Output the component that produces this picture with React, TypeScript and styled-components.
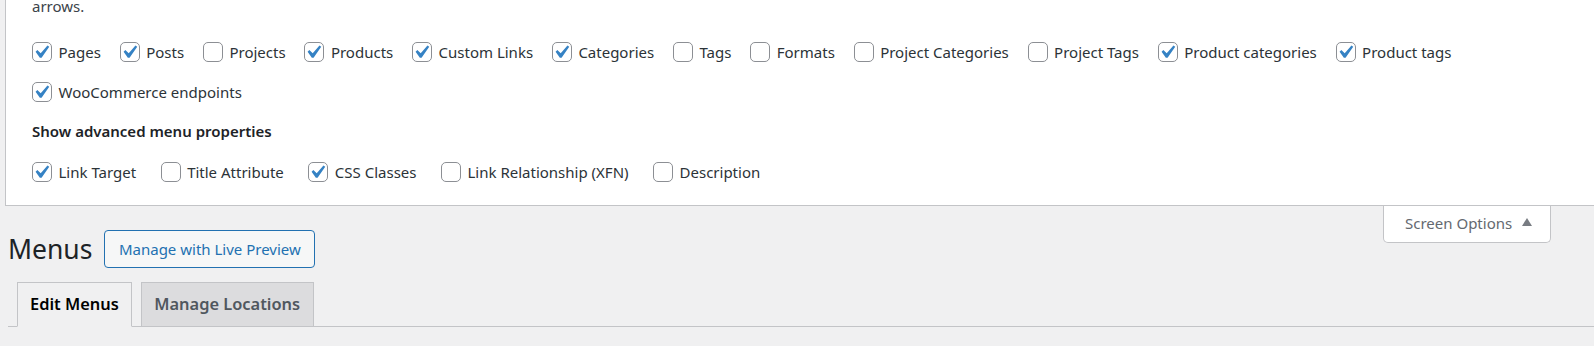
import React from 'react';
import styled, { createGlobalStyle } from 'styled-components';

const GlobalStyle = createGlobalStyle`
  html, body {
    margin: 0;
    padding: 0;
    background: #f0f0f1;
    font-family: "Noto Sans", "Open Sans", sans-serif;
    color: #3c434a;
  }
`;

const Page = styled.div`
  width: 1594px;
  height: 346px;
  overflow: hidden;
`;

const ScreenMeta = styled.div`
  margin-left: 5px;
  background: #fff;
  border-left: 1px solid #c3c4c7;
  border-bottom: 1px solid #c3c4c7;
  padding: 0 0 13px 26px;
  font-size: 15px;
`;

const Intro = styled.p`
  margin: 0 0 20px;
  line-height: 12px;
`;

const PrefsRow = styled.div`
  display: flex;
  flex-wrap: wrap;
  line-height: 40px;
`;

const Legend = styled.h5`
  margin: 7px 0 9px;
  font-size: 15px;
  line-height: 24px;
  font-weight: 600;
  color: #1d2327;
`;

const Label = styled.label<{ $gap: number }>`
  display: inline-flex;
  align-items: center;
  height: 40px;
  margin-right: ${p => p.$gap}px;
  color: #2c3338;
  white-space: nowrap;
`;

const Box = styled.span`
  position: relative;
  box-sizing: border-box;
  width: 20px;
  height: 20px;
  margin-right: 6.5px;
  border: 1px solid #8c8f94;
  border-radius: 5px;
  background: #fff;
  flex: none;

  svg {
    position: absolute;
    left: -5px;
    top: -4.5px;
  }
`;

const ScreenMetaLinks = styled.div`
  float: right;
  margin-right: 43px;
`;

const ScreenTab = styled.button`
  display: flex;
  align-items: center;
  gap: 10px;
  box-sizing: border-box;
  width: 168px;
  height: 37px;
  padding: 0 0 2px 21px;
  background: #fff;
  border: 1px solid #c3c4c7;
  border-top: none;
  border-radius: 0 0 5px 5px;
  font-family: inherit;
  font-size: 15px;
  color: #646970;
  cursor: pointer;
`;

const Arrow = styled.span`
  width: 0;
  height: 0;
  margin-top: -2px;
  border-left: 5px solid transparent;
  border-right: 5px solid transparent;
  border-bottom: 8px solid #787c82;
`;

const Wrap = styled.div`
  padding: 24px 0 0 8px;
`;

const TitleRow = styled.div`
  display: flex;
  align-items: center;
  height: 37.5px;
`;

const Title = styled.h1`
  margin: 0;
  font-size: 26.5px;
  font-weight: 400;
  line-height: 1.3;
  color: #1d2327;
`;

const OutlineButton = styled.a`
  display: inline-flex;
  align-items: center;
  box-sizing: border-box;
  height: 37.5px;
  margin-left: 12px;
  padding: 0 13.5px;
  border: 1px solid #2271b1;
  border-radius: 4px;
  background: #f6f7f7;
  color: #2271b1;
  font-size: 15px;
  text-decoration: none;
`;

const TabBar = styled.div`
  display: flex;
  margin-top: 14.5px;
  border-bottom: 1px solid #c3c4c7;
`;

const Tab = styled.a<{ $active?: boolean }>`
  box-sizing: border-box;
  height: 45px;
  margin: 0 0 -1px 8.5px;
  padding: 6.25px 12.5px;
  border: 1px solid #c3c4c7;
  border-bottom-color: ${p => (p.$active ? '#f0f0f1' : '#c3c4c7')};
  background: ${p => (p.$active ? '#f0f0f1' : '#dcdcde')};
  color: ${p => (p.$active ? '#000' : '#50575e')};
  font-size: 16.4px;
  font-weight: 600;
  line-height: 30px;
  text-decoration: none;
`;

const Check = () => (
  <svg width="26.25" height="26.25" viewBox="0 0 20 20" aria-hidden="true">
    <path fill="#3582c4" d="M14.83 4.89l1.34.94-5.81 8.38H9.02L5.78 9.67l1.34-1.25 2.57 2.4z" />
  </svg>
);

const Pref = ({ label, checked, gap }: { label: string; checked?: boolean; gap: number }) => (
  <Label $gap={gap}>
    <Box>{checked && <Check />}</Box>
    {label}
  </Label>
);

const boxes: [string, boolean][] = [
  ['Pages', true],
  ['Posts', true],
  ['Projects', false],
  ['Products', true],
  ['Custom Links', true],
  ['Categories', true],
  ['Tags', false],
  ['Formats', false],
  ['Project Categories', false],
  ['Project Tags', false],
  ['Product categories', true],
  ['Product tags', true],
  ['WooCommerce endpoints', true],
];

const advanced: [string, boolean][] = [
  ['Link Target', true],
  ['Title Attribute', false],
  ['CSS Classes', true],
  ['Link Relationship (XFN)', false],
  ['Description', false],
];

export default function App() {
  return (
    <Page>
      <GlobalStyle />
      <ScreenMeta>
        <Intro>arrows.</Intro>
        <PrefsRow>
          {boxes.map(([l, c]) => (
            <Pref key={l} label={l} checked={c} gap={18.8} />
          ))}
        </PrefsRow>
        <Legend>Show advanced menu properties</Legend>
        <PrefsRow>
          {advanced.map(([l, c]) => (
            <Pref key={l} label={l} checked={c} gap={24.5} />
          ))}
        </PrefsRow>
      </ScreenMeta>
      <ScreenMetaLinks>
        <ScreenTab>
          Screen Options <Arrow />
        </ScreenTab>
      </ScreenMetaLinks>
      <Wrap>
        <TitleRow>
          <Title>Menus</Title>
          <OutlineButton href="#">Manage with Live Preview</OutlineButton>
        </TitleRow>
        <TabBar>
          <Tab href="#" $active>Edit Menus</Tab>
          <Tab href="#">Manage Locations</Tab>
        </TabBar>
      </Wrap>
    </Page>
  );
}
